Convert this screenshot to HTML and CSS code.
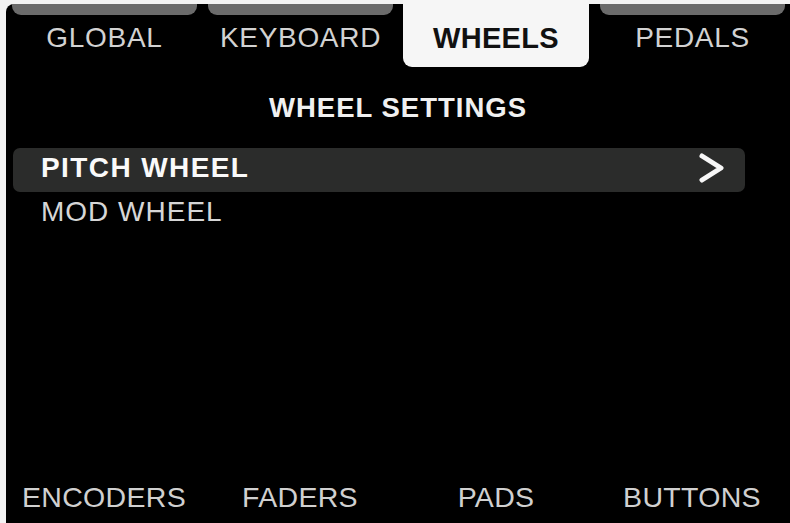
FILE: index.html
```html
<!DOCTYPE html>
<html>
<head>
<meta charset="utf-8">
<link rel="stylesheet" href="styles.css">
</head>
<body>
<div class="screen">
  <div class="tabs">
    <div class="tab"><div class="bar"></div><div class="label">GLOBAL</div></div>
    <div class="tab"><div class="bar"></div><div class="label">KEYBOARD</div></div>
    <div class="tab active"><div class="label">WHEELS</div></div>
    <div class="tab"><div class="bar"></div><div class="label">PEDALS</div></div>
  </div>
  <div class="heading">WHEEL SETTINGS</div>
  <div class="list">
    <div class="item selected">
      <span class="item-text">PITCH WHEEL</span>
      <svg class="chev" width="28" height="36" viewBox="0 0 28 36"><polyline points="4,6 23,18 4,30" fill="none" stroke="#f7f7f7" stroke-width="5" stroke-linecap="round" stroke-linejoin="round"/></svg>
    </div>
    <div class="item">
      <span class="item-text">MOD WHEEL</span>
    </div>
  </div>
  <div class="bottom">
    <div class="blabel">ENCODERS</div>
    <div class="blabel">FADERS</div>
    <div class="blabel">PADS</div>
    <div class="blabel">BUTTONS</div>
  </div>
</div>
</body>
</html>
```
FILE: styles.css
```css
html, body {
  margin: 0;
  padding: 0;
  background: #f3f3f3;
  width: 790px;
  height: 523px;
  overflow: hidden;
}
body {
  font-family: "Liberation Sans", Arial, sans-serif;
  padding: 4px 0 0 6px;
  box-sizing: border-box;
}
.screen {
  width: 784px;
  height: 519px;
  background: #000;
  border-top-left-radius: 8px;
  display: flex;
  flex-direction: column;
}
.tabs {
  display: grid;
  grid-template-columns: repeat(4, 196px);
  height: 63px;
}
.tab {
  padding: 0 5px 0 6px;
  text-align: center;
}
.bar {
  height: 11px;
  background: #6b6b6b;
  border-radius: 0 0 9px 9px;
}
.label {
  margin-top: 7px;
  font-size: 28px;
  line-height: 32px;
  letter-spacing: 0.7px;
  color: #d2d2d2;
}
.tab.active {
  margin: -4px 5px 0 5px;
  padding: 22px 0 0 0;
  height: 67px;
  box-sizing: border-box;
  background: #f6f6f6;
  border-radius: 0 0 9px 9px;
}
.tab.active .label {
  margin-top: 0;
  font-weight: bold;
  color: #111;
  font-size: 29px;
  letter-spacing: 0.3px;
}
.heading {
  margin-top: 25px;
  text-align: center;
  font-weight: bold;
  font-size: 27.5px;
  line-height: 32px;
  letter-spacing: 1px;
  color: #f0f0f0;
}
.list {
  margin-top: 24px;
  display: flex;
  flex-direction: column;
}
.item {
  width: 732px;
  height: 44px;
  margin-left: 7px;
  padding: 0 19px 0 28px;
  box-sizing: border-box;
  display: flex;
  align-items: flex-start;
  justify-content: space-between;
}
.item-text {
  font-size: 28px;
  line-height: 40px;
  letter-spacing: 1px;
  color: #d6d6d6;
}
.item.selected {
  background: #2b2c2b;
  border-radius: 7px;
  align-items: center;
}
.item.selected .item-text {
  font-weight: bold;
  color: #fafafa;
  letter-spacing: 1.4px;
  margin-bottom: 4px;
}
.chev {
  display: block;
  margin-top: -4px;
}
.bottom {
  margin-top: auto;
  margin-bottom: 10px;
  display: grid;
  grid-template-columns: repeat(4, 196px);
}
.blabel {
  text-align: center;
  font-size: 28.5px;
  line-height: 32px;
  letter-spacing: 0.3px;
  color: #d0d0d0;
}
```
